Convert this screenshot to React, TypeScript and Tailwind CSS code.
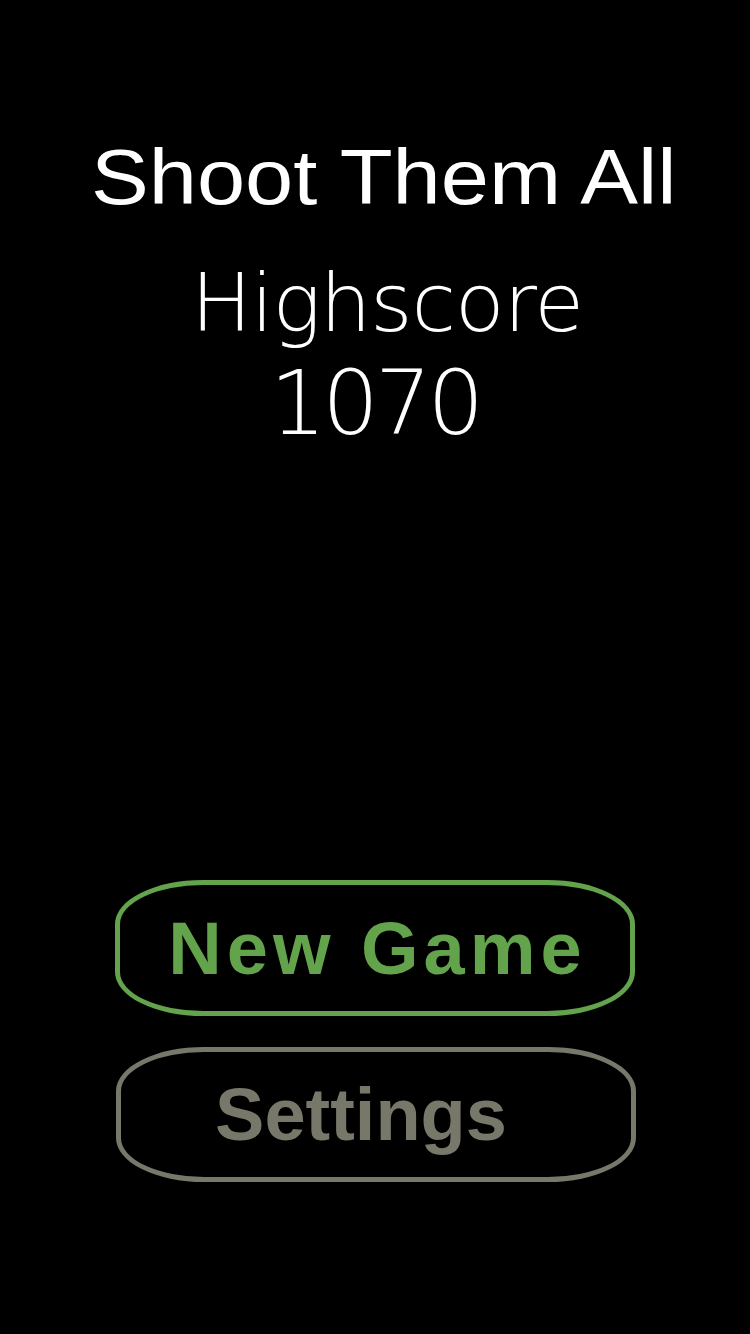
import React from "react";

export default function App() {
  return (
    <div className="w-[750px] h-[1334px] bg-black flex flex-col items-center overflow-hidden">
      <h1 className="mt-[138px] ml-[17px] text-[78px] leading-[78px] scale-x-[1.11] text-white font-['Liberation_Sans',Arial,sans-serif] whitespace-nowrap">
        Shoot Them All
      </h1>
      <div className="mt-[47px] flex flex-col items-center text-white font-['DejaVu_Sans',sans-serif] font-extralight">
        <div className="ml-[24px] text-[81px] leading-[81px] tracking-[-1px]">Highscore</div>
        <div className="mt-[15px] text-[89px] leading-[89px] tracking-[-4px]">1070</div>
      </div>

      <div className="mt-[432px] flex flex-col items-center gap-[31px] font-['Liberation_Sans',Arial,sans-serif] font-bold">
        <button className="w-[520px] h-[136px] border-[5px] border-[#63a34b] rounded-[88px/44px] flex items-center justify-center pl-[5px] text-[#63a34b] text-[74px] tracking-[5px]">
          New Game
        </button>
        <button className="w-[520px] h-[135px] ml-[2px] border-[5px] border-[#77786a] rounded-[88px/44px] flex items-center justify-center pr-[30px] text-[#77786a] text-[74px]">
          Settings
        </button>
      </div>
    </div>
  );
}
